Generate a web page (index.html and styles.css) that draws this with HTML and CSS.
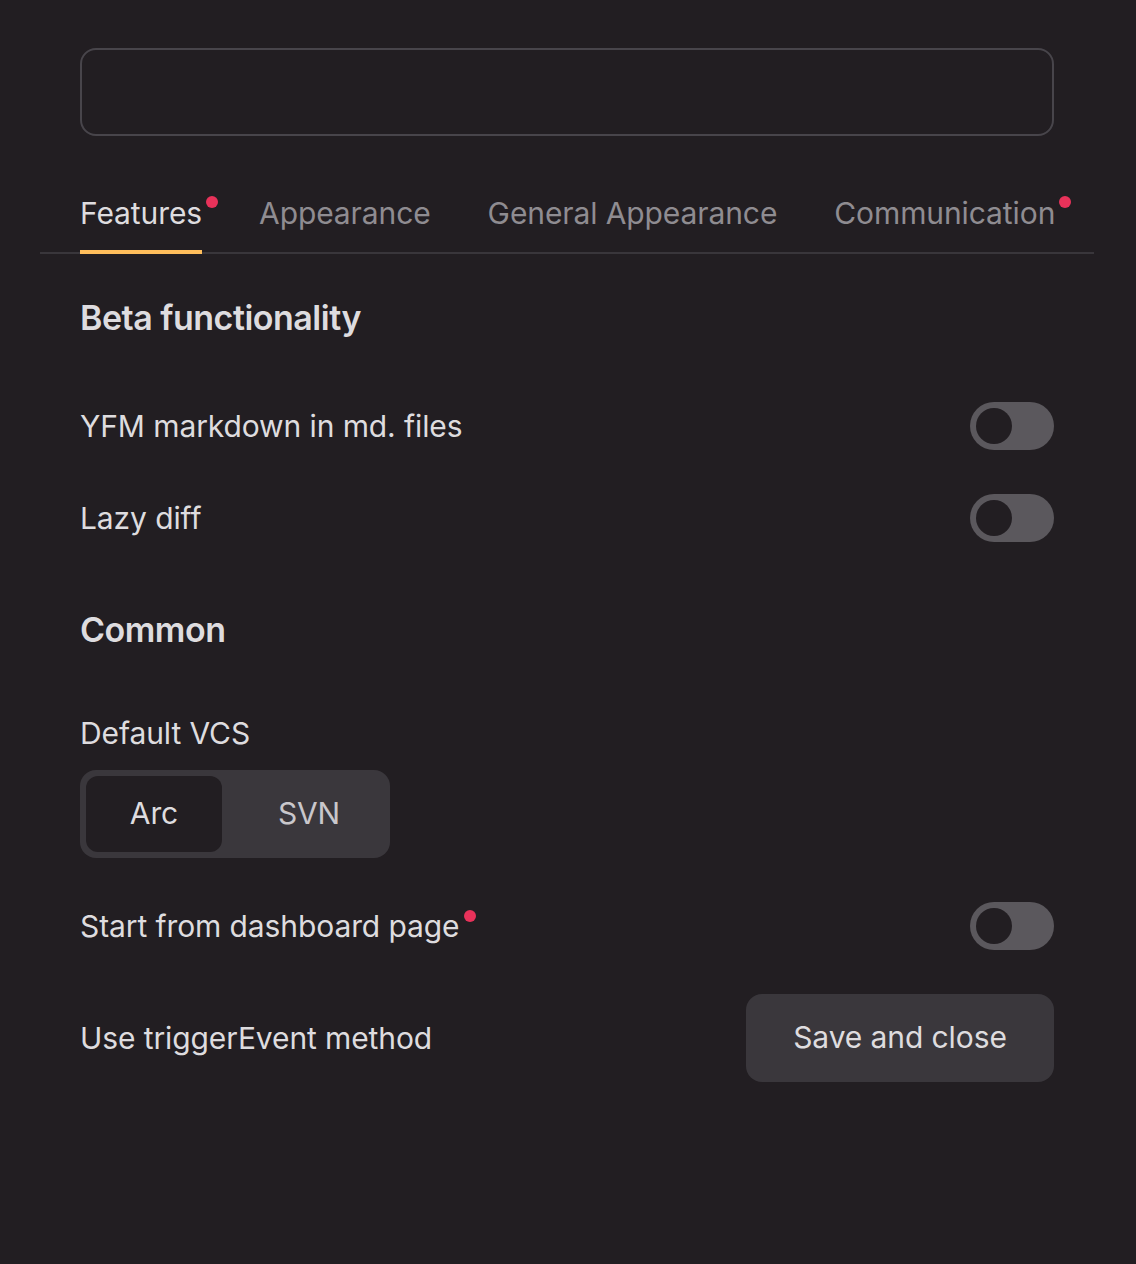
FILE: index.html
```html
<!DOCTYPE html>
<html lang="en">
<head>
<meta charset="utf-8">
<title>Settings</title>
<link rel="stylesheet" href="styles.css">
</head>
<body>
<div class="page">
  <div class="search"></div>

  <nav class="tabs">
    <div class="tab tab-active"><span class="tab-text">Features<i class="dot"></i></span></div>
    <div class="tab"><span class="tab-text">Appearance</span></div>
    <div class="tab"><span class="tab-text">General Appearance</span></div>
    <div class="tab"><span class="tab-text">Communication<i class="dot"></i></span></div>
  </nav>

  <div class="content">
    <h2 class="section-title first">Beta functionality</h2>

    <div class="row">
      <span class="label">YFM markdown in md. files</span>
      <span class="switch"><span class="thumb"></span></span>
    </div>
    <div class="row">
      <span class="label">Lazy diff</span>
      <span class="switch"><span class="thumb"></span></span>
    </div>

    <h2 class="section-title">Common</h2>

    <div class="field">
      <span class="label">Default VCS</span>
      <div class="segmented">
        <span class="seg seg-active">Arc</span>
        <span class="seg">SVN</span>
      </div>
    </div>

    <div class="row">
      <span class="label">Start from dashboard page<i class="dot"></i></span>
      <span class="switch"><span class="thumb"></span></span>
    </div>
    <div class="row">
      <span class="label">Use triggerEvent method</span>
      <button class="btn">Save and close</button>
    </div>
  </div>
</div>
</body>
</html>
```

FILE: styles.css
```css
html, body {
  margin: 0;
  padding: 0;
  background: #221e22;
}

body {
  font-family: Inter, "Noto Sans", sans-serif;
  color: #dedcdf;
  font-size: 30px;
  line-height: 40px;
  letter-spacing: -0.1px;
}

.page {
  padding: 48px 42px 0 40px;
}

.search {
  margin: 0 40px;
  height: 88px;
  box-sizing: border-box;
  border: 2px solid #48454b;
  border-radius: 16px;
}

.tabs {
  margin-top: 34px;
  display: flex;
  gap: 57px;
  padding: 0 40px;
  border-bottom: 2px solid #39363b;
  white-space: nowrap;
}

.tab {
  flex-shrink: 0;
  height: 82px;
  padding-top: 4px;
  box-sizing: border-box;
  display: flex;
  align-items: center;
  position: relative;
  color: #8f8c91;
}

.tab-text {
  position: relative;
  display: inline-block;
}

.tab-active {
  color: #dedcdf;
}

.tab-active::after {
  content: "";
  position: absolute;
  left: 0;
  right: 0;
  bottom: -2px;
  height: 4px;
  background: #ffbe5c;
}

.dot {
  position: absolute;
  right: -16px;
  top: 3px;
  width: 12px;
  height: 12px;
  border-radius: 50%;
  background: #e8325a;
}

.content {
  padding: 0 40px;
}

.section-title {
  margin: 68px 0 0;
  font-size: 34px;
  line-height: 40px;
  font-weight: 600;
  letter-spacing: -0.5px;
  color: #dedcdf;
}

.section-title.first {
  margin-top: 44px;
}

.row {
  display: flex;
  align-items: center;
  justify-content: space-between;
  margin-top: 44px;
}

.section-title + .row {
  margin-top: 64px;
}

.label {
  position: relative;
  display: inline-block;
  white-space: nowrap;
}

.label .dot {
  right: -17px;
  top: 4px;
}

.switch {
  width: 84px;
  height: 48px;
  border-radius: 24px;
  background: #5b585d;
  display: flex;
  align-items: center;
  padding: 0 6px;
  box-sizing: border-box;
}

.thumb {
  width: 36px;
  height: 36px;
  border-radius: 50%;
  background: #221e22;
}

.field {
  margin-top: 63px;
  display: flex;
  flex-direction: column;
  align-items: flex-start;
  gap: 17px;
}

.segmented {
  display: flex;
  height: 88px;
  box-sizing: border-box;
  padding: 6px;
  gap: 12px;
  background: #3a373c;
  border-radius: 16px;
}

.seg {
  display: flex;
  align-items: center;
  justify-content: center;
  width: 136px;
  padding-bottom: 2px;
  box-sizing: border-box;
  border-radius: 12px;
  color: #c9c7cb;
}

.seg + .seg {
  width: 150px;
}

.seg-active {
  background: #221e22;
  color: #dedcdf;
}

.btn {
  font: inherit;
  letter-spacing: inherit;
  color: #dedcdf;
  background: #3a373c;
  border: none;
  border-radius: 16px;
  width: 308px;
  height: 88px;
  padding: 0 0 3px;
}
```
